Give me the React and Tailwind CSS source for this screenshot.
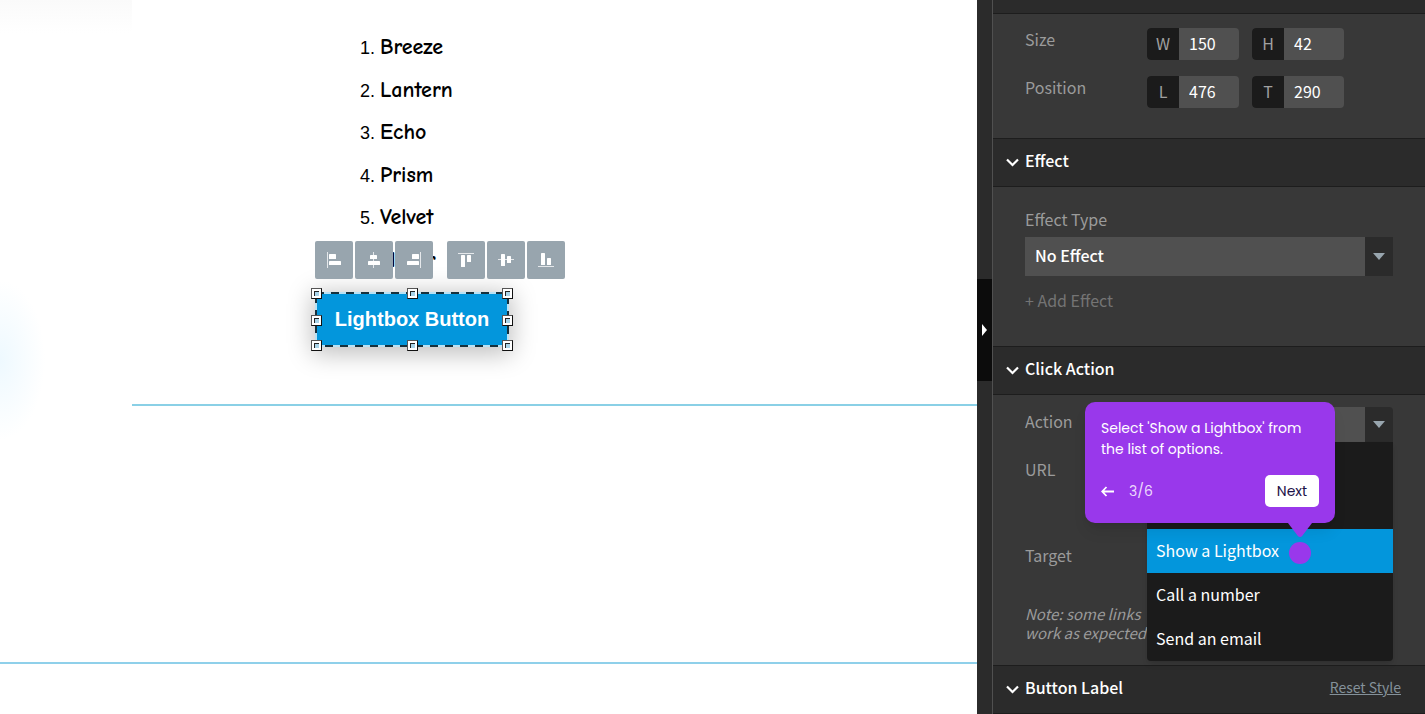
import React from 'react';

const words = ['Breeze', 'Lantern', 'Echo', 'Prism', 'Velvet', 'Hover'];

// Each icon is a guide line plus two bars
const alignTools = [
  { name: 'Align left', shapes: [[1, 0, 1, 16], [3, 2, 7, 5], [3, 9, 12, 4]] },
  { name: 'Align center', shapes: [[7, 0, 1, 16], [4, 3, 7, 4], [2, 9, 12, 4]] },
  { name: 'Align right', shapes: [[14, 0, 1, 16], [6, 2, 7, 5], [1, 9, 12, 4]] },
];

const distributeTools = [
  { name: 'Align top', shapes: [[0, 1, 16, 1], [3, 3, 4, 12], [9, 3, 4, 7]] },
  { name: 'Align middle', shapes: [[0, 7, 16, 1], [3, 2, 4, 12], [9, 4, 4, 7]] },
  { name: 'Align bottom', shapes: [[0, 14, 16, 1], [3, 1, 4, 12], [9, 6, 4, 7]] },
];

const handles = [
  '-left-[5px] -top-[5px]',
  'left-1/2 -ml-[5px] -top-[5px]',
  '-right-[5px] -top-[5px]',
  '-left-[5px] top-1/2 -mt-[5px]',
  '-right-[5px] top-1/2 -mt-[5px]',
  '-left-[5px] -bottom-[5px]',
  'left-1/2 -ml-[5px] -bottom-[5px]',
  '-right-[5px] -bottom-[5px]',
];

const ToolGroup = ({ tools }) => (
  <div className="flex gap-0.5">
    {tools.map((tool) => (
      <button
        key={tool.name}
        aria-label={tool.name}
        className="flex h-[38px] w-[38px] items-center justify-center rounded-xs bg-[#98a5ae] cursor-pointer"
      >
        <svg width="16" height="16" viewBox="0 0 16 16" fill="#fff">
          {tool.shapes.map(([x, y, w, h], i) => (
            <rect key={i} x={x} y={y} width={w} height={h} rx={i ? 0.6 : 0} opacity={i ? 1 : 0.75} />
          ))}
        </svg>
      </button>
    ))}
  </div>
);

const Canvas = () => (
  <main className="min-w-0 flex-1 bg-white">
    <div className="flex h-[664px] border-b-2 border-[#8fd0ea]">
      {/* Blurred page edge */}
      <div className="flex w-[132px] shrink-0 flex-col bg-linear-to-b from-[#fafafa] to-white to-5%">
        <div className="mt-[190px] h-[340px] w-full bg-[radial-gradient(ellipse_45px_80px_at_0_50%,#eef9ff,transparent)]" />
      </div>

      <div className="h-[406px] min-w-0 flex-1 border-b-2 border-[#8ad0e6] pt-[26px]">
        <ol className="ml-[228px] grid h-[255px] grid-rows-6 items-center text-black">
          {words.map((word, i) => (
            <li key={word} className="flex items-baseline">
              <span className="w-5 font-['Liberation_Sans'] text-lg">{i + 1}.</span>
              <span className="font-['Comic_Sans_MS','Comic_Neue',cursive] text-[22px] leading-8 font-bold">
                {word}
              </span>
            </li>
          ))}
        </ol>

        <div className="relative ml-[184px] mt-3 h-[53px] w-48 shadow-[0_4px_24px_4px_rgba(0,0,0,0.25)]">
          <div className="absolute -left-px bottom-full mb-3.5 flex gap-3.5">
            <ToolGroup tools={alignTools} />
            <ToolGroup tools={distributeTools} />
          </div>
          <button className="h-full w-full whitespace-nowrap bg-[#0396dc] pb-0.5 font-['Liberation_Sans'] text-xl font-bold text-white cursor-pointer">
            Lightbox Button
          </button>
          <svg className="pointer-events-none absolute inset-0 h-full w-full overflow-visible">
            <rect width="100%" height="100%" fill="none" stroke="#b9e2f5" strokeWidth="2" />
            <rect width="100%" height="100%" fill="none" stroke="#16313d" strokeWidth="2" strokeDasharray="8 7" />
          </svg>
          {handles.map((place) => (
            <span
              key={place}
              className={`absolute h-[11px] w-[11px] border border-t-[#555] border-l-[#555] border-r-[#111] border-b-[#111] bg-white p-0.5 ${place}`}
            >
              <span className="block h-full w-full border-t border-l border-[#222] bg-[#a9d3e8]" />
            </span>
          ))}
        </div>
      </div>
    </div>
  </main>
);

const NumberField = ({ label, value }) => (
  <label className="flex h-8 w-[92px] overflow-hidden rounded-sm bg-[#505050]">
    <span className="flex w-8 items-center justify-center bg-[#1b1b1b] pb-0.5 text-[#a0a0a0]">{label}</span>
    <input defaultValue={value} className="w-[60px] bg-transparent px-2.5 pb-0.5 text-white outline-none" />
  </label>
);

const SectionHeader = ({ title, children }) => (
  <div className="flex h-[49px] items-center border-y border-[#1d1d1d] bg-[#2b2b2b] pl-[13px] pr-6">
    <button className="flex items-center gap-1.5 text-white cursor-pointer">
      <svg width="13" height="9" viewBox="0 0 13 9" fill="none" stroke="currentColor" strokeWidth="2.2">
        <path d="M1 1.500l5.500 5.500L12 1.500" />
      </svg>
      <span className="pb-1.5 font-medium">{title}</span>
    </button>
    {children}
  </div>
);

const SelectBox = ({ id, value, className }) => (
  <div className={`flex min-w-0 flex-1 ${className}`}>
    <select id={id} defaultValue={value} className="min-w-0 flex-1 appearance-none bg-[#505050] px-2.5 pb-1 font-medium text-white outline-none">
      <option>{value}</option>
    </select>
    <span className="pointer-events-none flex w-7 items-center justify-center bg-[#2b2b2b]">
      <svg width="12" height="7" viewBox="0 0 12 7" fill="#98a5ae">
        <path d="M0 0h12L6 7z" />
      </svg>
    </span>
  </div>
);

const Tooltip = () => (
  <div className="absolute left-[92px] top-[7px] z-20 w-[250px] rounded-[10px] bg-[#9938eb] p-4 font-['Poppins','Inter',sans-serif] text-sm text-white shadow-lg">
    <p className="leading-[21px] whitespace-nowrap">
      Select 'Show a Lightbox' from
      <br />
      the list of options.
    </p>
    <div className="mt-[15px] flex items-center">
      <button aria-label="Back" className="cursor-pointer">
        <svg width="13" height="11" viewBox="0 0 13 11" fill="none" stroke="currentColor" strokeWidth="1.800">
          <path d="M13 5.500H1.500M5.500 1L1.200 5.500l4.300 4.500" />
        </svg>
      </button>
      <span className="ml-[15px] text-[#ecd9fc]">3/6</span>
      <button className="ml-auto h-8 w-[54px] rounded-[5px] bg-white text-[#1c1147] cursor-pointer">Next</button>
    </div>
    <svg className="absolute left-[203px] top-full" width="24" height="41" viewBox="0 0 24 41" fill="#9938eb">
      <path d="M0 0h24L14.5 12.5q-2.500 3-5 0z" />
      <circle cx="12" cy="30" r="11" />
    </svg>
  </div>
);

const Panel = () => (
  <aside className="w-[433px] shrink-0 border-l border-[#505050] bg-[#383838] font-['Source_Sans_Pro','Noto_Sans_CJK_SC',sans-serif] text-base leading-[22px] text-[#9b9b9b]">
    <div className="h-3.5 border-b border-[#1d1d1d] bg-[#2b2b2b]" />
    <div className="flex flex-col gap-4 px-8 pb-[30px] pt-3.5">
      <div className="flex">
        <span className="w-[122px]">Size</span>
        <div className="flex gap-[13px]">
          <NumberField label="W" value="150" />
          <NumberField label="H" value="42" />
        </div>
      </div>
      <div className="flex">
        <span className="w-[122px]">Position</span>
        <div className="flex gap-[13px]">
          <NumberField label="L" value="476" />
          <NumberField label="T" value="290" />
        </div>
      </div>
    </div>

    <SectionHeader title="Effect" />
    <div className="flex flex-col items-start px-8 pb-[35px] pt-[21px]">
      <label htmlFor="effect">Effect Type</label>
      <div className="mt-[7px] flex w-full">
        <SelectBox id="effect" value="No Effect" className="h-[39px]" />
      </div>
      <button className="mt-[13px] text-[#747474] cursor-pointer">+ Add Effect</button>
    </div>

    <SectionHeader title="Click Action" />
    <div className="relative px-8 pb-[23px] pt-3">
      <div className="relative flex">
        <label htmlFor="action" className="w-[122px] pt-[3px]">Action</label>
        <SelectBox id="action" value="Show a Lightbox" className="h-[35px] overflow-hidden rounded-t-sm" />

        {/* Open list of actions */}
        <div className="absolute left-[122px] right-0 top-full z-10 flex flex-col rounded-b-sm bg-[#1b1b1b] pt-[87px] text-white shadow-md">
          <button className="h-11 bg-[#0396dc] px-[9px] pb-0.5 text-left cursor-pointer">Show a Lightbox</button>
          <button className="h-11 px-[9px] pb-0.5 text-left cursor-pointer">Call a number</button>
          <button className="h-11 px-[9px] pb-0.5 text-left cursor-pointer">Send an email</button>
        </div>
      </div>
      <p className="mt-4">URL</p>
      <p className="mt-16">Target</p>
      <p className="mt-[38px] text-[15px] leading-[19px] italic">
        Note: some links
        <br />
        work as expected
      </p>
      <Tooltip />
    </div>

    <SectionHeader title="Button Label">
      <a href="#reset" className="ml-auto pb-1.5 text-sm text-[#84919a] underline">Reset Style</a>
    </SectionHeader>
  </aside>
);

const App = () => {
  return (
    <div className="flex min-h-screen overflow-hidden">
      <Canvas />
      <div className="w-[15px] shrink-0 bg-[#2b2b2b] pt-[279px]">
        <button aria-label="Collapse panel" className="flex h-[102px] w-full items-center justify-center bg-[#0c0c0c] cursor-pointer">
          <svg width="5" height="12" viewBox="0 0 5 12" fill="#fff">
            <path d="M0 0l5 6-5 6z" />
          </svg>
        </button>
      </div>
      <Panel />
    </div>
  );
};

export default App;
